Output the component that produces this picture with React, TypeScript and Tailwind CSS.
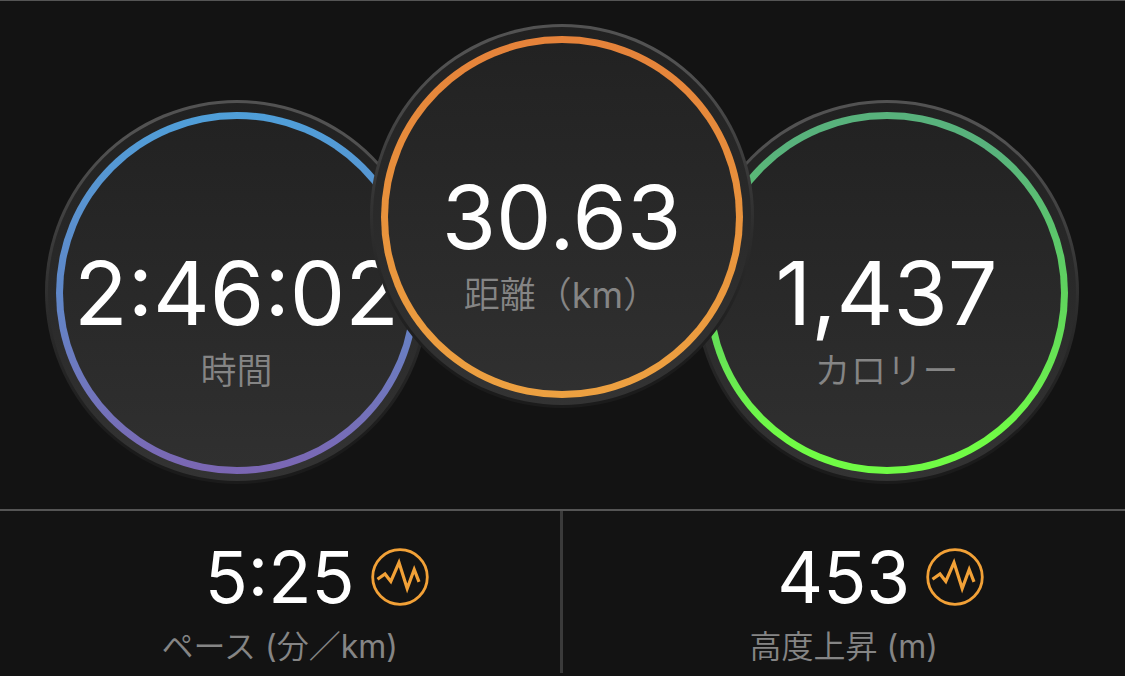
type Gauge = { value: string; label: string; ring: string; place: string };

const gauges: Gauge[] = [
  {
    value: "2:46:02",
    label: "時間",
    ring: "bg-linear-to-b from-[#4f9fd9] via-[#5f87c8] to-[#7b66b3]",
    place: "mt-[76px]",
  },
  {
    value: "30.63",
    label: "距離（km）",
    ring: "bg-linear-to-b from-[#e5823a] via-[#e8923c] to-[#eda141]",
    place: "z-10 -mx-[59px]",
  },
  {
    value: "1,437",
    label: "カロリー",
    ring: "bg-linear-to-b from-[#58b27c] from-10% via-[#5fd35c] via-50% to-[#70fb45] to-90%",
    place: "mt-[76px]",
  },
];

const stats = [
  { value: "5:25", label: "ペース (分／km)" },
  { value: "453", label: "高度上昇 (m)" },
];

function GaugeDial({ value, label, ring, place }: Gauge) {
  return (
    <div
      className={`relative size-96 shrink-0 rounded-full bg-linear-to-b from-[#525252] from-10% via-[#2c2c2c] via-55% to-[#1b1b1b] to-90% p-[3px] ${place}`}
    >
      <div className="h-full rounded-full bg-linear-to-b from-[#212121] to-[#333333] px-2 pt-[9px] pb-[7px]">
        <div className={`h-full rounded-full p-[7px] ${ring}`}>
          <div className="flex h-full flex-col items-center rounded-full bg-linear-to-b from-[#222222] to-[#303030] pt-[130px]">
            <p className="text-[88px] leading-[88px] whitespace-nowrap text-white">{value}</p>
            <p className="mt-4 font-['Inter','Noto_Sans_CJK_JP_DemiLight','Noto_Sans_CJK_JP',sans-serif] text-[36px] leading-9 whitespace-nowrap text-[#858585]">
              {label}
            </p>
          </div>
        </div>
      </div>
    </div>
  );
}

function ChartIcon() {
  return (
    <svg viewBox="0 0 58 58" className="size-[58px]" fill="none" stroke="#f2a137" aria-hidden="true">
      <circle cx="29" cy="29" r="27.3" strokeWidth="2.8" />
      <path d="M6.5 31.2 14 26 19.8 33.5 28 14.5 36.2 40.5 43.2 21.5 48 33.8" strokeWidth="3.2" />
    </svg>
  );
}

export default function App() {
  return (
    <main className="min-h-screen overflow-hidden border-t border-[#555555] bg-[#131313] font-['Inter','Noto_Sans_CJK_JP',sans-serif]">
      <section className="flex items-start justify-center pt-[23px] pr-0.5 pb-[25px]">
        {gauges.map((g) => (
          <GaugeDial key={g.label} {...g} />
        ))}
      </section>
      <section className="grid grid-cols-2 border-t-2 border-[#555555]">
        {stats.map((s) => (
          <div
            key={s.label}
            className="flex flex-col items-center border-[#3a3a3a] pt-[30px] pb-2 first:border-r-[3px]"
          >
            <p className="relative text-[71px] leading-[72px] text-white">
              {s.value}
              <button
                type="button"
                aria-label={`${s.label} グラフ`}
                className="absolute top-1/2 left-full ml-4 -translate-y-1/2"
              >
                <ChartIcon />
              </button>
            </p>
            <p className="mt-4 font-['Inter','Noto_Sans_CJK_JP_DemiLight','Noto_Sans_CJK_JP',sans-serif] text-[32px] leading-9 whitespace-nowrap text-[#858585]">
              {s.label}
            </p>
          </div>
        ))}
      </section>
    </main>
  );
}
